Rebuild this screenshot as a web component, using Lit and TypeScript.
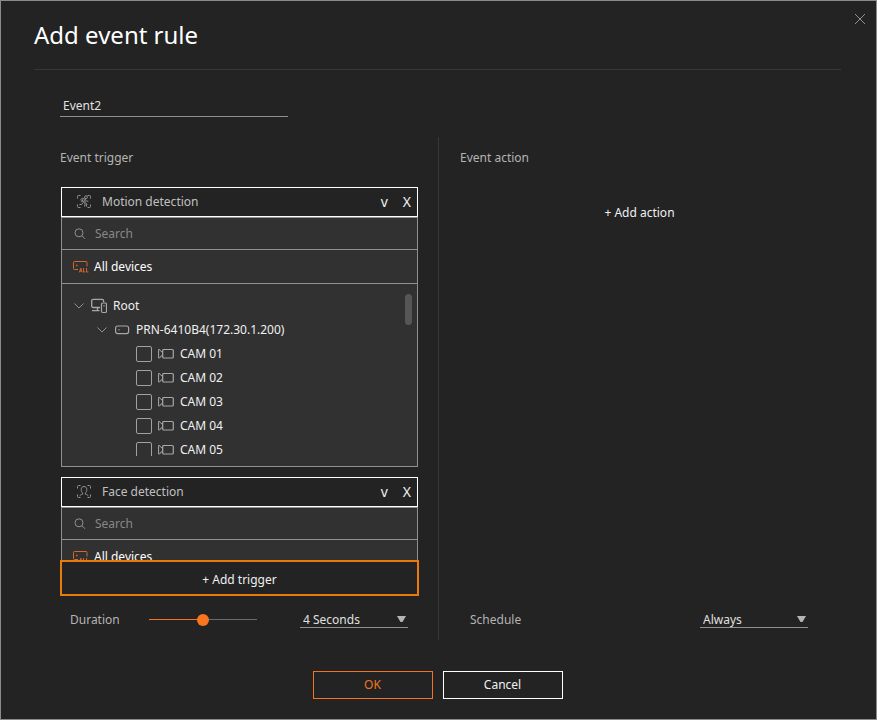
import { LitElement, html, css, svg, nothing } from "lit";
import { customElement, property, state } from "lit/decorators.js";
import { styleMap } from "lit/directives/style-map.js";

const frameCorners = svg`<path d="M1.5 3.5V1.5Q1.5 .5 2.5 .5H4.5M11.5 .5H13.5Q14.5 .5 14.5 1.5V3.5M14.5 9.5V11.5Q14.5 12.5 13.5 12.5H11.5M4.5 12.5H2.5Q1.5 12.5 1.5 11.5V9.5" />`;

const motionIcon = html`<svg width="16" height="14" viewBox="0 0 16 14" class="icon dim" aria-hidden="true">
  ${frameCorners}
  <circle cx="10" cy="2.2" r="1.4" />
  <path d="M4.3 5.2L6.2 3.2L9.3 4.3L7.2 7L9.2 8.6L8.6 11.6M9.3 4.3L10.4 6.1L12.4 6.3M6.9 7.6L5.8 9.4L3.4 9.6M9.4 6L8.6 7.2L10.8 8.9L10.3 11.6M4.8 6.4L6.9 4.6L5.9 7.2" />
</svg>`;

const faceIcon = html`<svg width="16" height="14" viewBox="0 0 16 14" class="icon dim" aria-hidden="true">
  ${frameCorners}
  <path d="M3.8 11.2C4 9.9 5 9.6 6.6 9.2V8C5.6 7.1 5.2 5.8 5.2 4.4C5.2 2.6 6.3 1.5 8 1.5S10.8 2.6 10.8 4.4C10.8 5.8 10.4 7.1 9.4 8V9.2C11 9.6 12 9.9 12.2 11.2" />
</svg>`;

const searchIcon = html`<svg width="12" height="12" viewBox="0 0 12 12" class="icon dim" aria-hidden="true">
  <circle cx="5" cy="4.8" r="4" /><path d="M8 7.8L11 10.8" />
</svg>`;

const allIcon = html`<svg width="16" height="13" viewBox="0 0 16 13" class="icon accent" aria-hidden="true">
  <path d="M5 9.5H1.5Q.5 9.5 .5 8.5V2.5Q.5 1.5 1.5 1.5H13Q14 1.5 14 2.5V6.5" />
  <path d="M3 5.5H4.5" stroke-width="1.4" />
  <path d="M6.4 12.4L7.8 8.2L9.2 12.4M6.9 11.2H8.7M10.6 8V12H12.3M13.6 8V12H15.3" />
</svg>`;

const rootIcon = html`<svg width="16" height="16" viewBox="0 0 16 16" class="icon" aria-hidden="true">
  <path d="M9 9.5H2.3Q.7 9.5 .7 8V2.8Q.7 1.3 2.3 1.3H11Q12.6 1.3 12.6 2.8V4M6.5 9.5V12.5M1 12.6H8.5" stroke-width="1.3" />
  <rect x="10.5" y="5" width="5" height="9.5" rx="1.2" stroke-width="1.2" /><path d="M13 7V8.5" />
</svg>`;

const recorderIcon = html`<svg width="16" height="10" viewBox="0 0 16 10" class="icon" aria-hidden="true">
  <rect x="1.6" y="1" width="13" height="7.6" rx="2" stroke-width="1.2" /><path d="M4.5 4.8H5.5" stroke-width="1.4" />
</svg>`;

const cameraIcon = html`<svg width="16" height="12" viewBox="0 0 16 12" class="icon" aria-hidden="true">
  <rect x="4.7" y="1.5" width="10.6" height="8.5" rx="1" stroke-width="1.2" /><path d="M4.5 4L3 3.5L1.6 1.5H.6V10H1.6L3 8L4.5 7.5" />
</svg>`;

const chevron = html`<svg width="10" height="6" viewBox="0 0 10 6" class="icon dim" aria-hidden="true">
  <path d="M.5 .5L5 5L9.5 .5" />
</svg>`;

const base = css`
  * { box-sizing: border-box; }
  button, input, select { font: inherit; color: inherit; margin: 0; padding: 0; border: 0; border-radius: 0; background: none; outline: none; }
  button { cursor: pointer; }
  .icon { flex: none; display: block; fill: none; stroke: #a8a8a8; stroke-width: 1; }
  .dim { stroke: #909090; }
  .accent { stroke: #d4672a; }
`;

@customElement("trigger-card")
class TriggerCard extends LitElement {
  @property() name = "";
  @property() kind = "motion";
  @property({ attribute: false }) cameras: string[] = [];

  static styles = [base, css`
    :host { display: block; flex: none; }
    .head { display: flex; align-items: center; height: 30px; padding: 0 6px 0 14px; border: 1px solid #fff; }
    .name { flex: 1; margin: 0 0 0 10px; font-size: 12px; font-weight: 400; color: #c0c0c0; }
    .mark { font-size: 14px; color: #f0f0f0; }
    .mark + .mark { margin-left: 15px; }
    .body { border: 1px solid #909090; background: #313131; }
    .search { display: flex; align-items: center; gap: 9px; height: 32px; padding: 0 12px; border-bottom: 1px solid #909090; }
    .search input { flex: 1; min-width: 0; }
    .search input::placeholder { color: #888; opacity: 1; }
    .all { display: flex; align-items: center; gap: 5px; width: 100%; height: 34px; padding: 0 11px; border-bottom: 1px solid #909090; text-align: left; color: #fff; }
    .tree { position: relative; padding: 10px 0; }
    .view { height: 162px; overflow: hidden; }
    .thumb { position: absolute; top: 10px; right: 5px; width: 7px; height: 31px; border-radius: 4px; background: #565656; }
    ul { list-style: none; margin: 0; padding: 0; }
    .row { display: flex; align-items: center; height: 24px; gap: 6px; }
    .root { padding-left: 12px; }
    .device { padding-left: 35px; }
    .camera { padding-left: 74px; }
    .row .icon:first-child { margin-right: 1px; }
    .check { appearance: none; flex: none; width: 16px; height: 16px; border: 1px solid #a0a0a0; border-radius: 2px; }
    .check:checked { background: #f37321; }
  `];

  private tree() {
    return html`<div class="tree">
      <div class="view">
        <div class="row root">${chevron}${rootIcon}<span>Root</span></div>
        <div class="row device">${chevron}${recorderIcon}<span>PRN-6410B4(172.30.1.200)</span></div>
        <ul>
          ${this.cameras.map((c) => html`<li><label class="row camera"><input class="check" type="checkbox" />${cameraIcon}<span>${c}</span></label></li>`)}
        </ul>
      </div>
      <div class="thumb"></div>
    </div>`;
  }

  render() {
    return html`
      <header class="head">
        ${this.kind === "motion" ? motionIcon : faceIcon}
        <h3 class="name">${this.name}</h3>
        <button class="mark" aria-label="Collapse">v</button>
        <button class="mark" aria-label="Remove">X</button>
      </header>
      <div class="body">
        <label class="search">${searchIcon}<input type="text" aria-label="Search" placeholder="Search" /></label>
        <button class="all">${allIcon}All devices</button>
        ${this.cameras.length ? this.tree() : nothing}
      </div>
    `;
  }
}

@customElement("app-root")
class AppRoot extends LitElement {
  @state() private duration = 50;
  private cameras = ["CAM 01", "CAM 02", "CAM 03", "CAM 04", "CAM 05"];

  static styles = [base, css`
    :host { display: block; font: 12px/20px "Noto Sans", "Open Sans", sans-serif; color: #f0f0f0; }
    .dialog { position: relative; display: flex; flex-direction: column; height: 100vh; min-height: 480px; border: 1px solid #8a8c8c; background: #232323; }
    .top { display: flex; align-items: center; height: 69px; margin: 0 35px 0 33px; border-bottom: 1px solid #373737; }
    h1 { margin: 0; font-size: 24px; line-height: 32px; font-weight: 400; color: #fff; }
    .close { position: absolute; top: 12px; right: 10px; width: 12px; height: 12px; }
    .title { width: 228px; height: 22px; margin: 25px 59px 20px; padding: 0 3px; border-bottom: 1px solid #909090; flex: none; color: #e0e0e0; }
    .columns { flex: 1; min-height: 0; display: grid; grid-template-columns: 1fr auto 1fr; grid-template-rows: minmax(0, 1fr); margin: 0 57px 0 59px; }
    .split { width: 1px; margin: 0 21px 0 19px; background: #373737; }
    .column { display: flex; flex-direction: column; min-width: 0; padding-top: 10px; }
    h2 { margin: 0 0 18px; font-size: 12px; line-height: 22px; font-weight: 400; color: #b4b4b4; }
    .list { flex: 1; min-height: 0; display: flex; flex-direction: column; gap: 10px; padding: 0 1px; overflow: auto; scrollbar-width: none; }
    .add-trigger { height: 36px; flex: none; padding-top: 4px; border: 2px solid #e87b0c; }
    .actions { flex: 1; padding-top: 16px; text-align: center; }
    .setting { display: flex; align-items: center; height: 16px; margin: 16px 10px 12px; color: #b4b4b4; flex: none; }
    .label { flex: 1; }
    .slider { appearance: none; width: 108px; height: 12px; margin-right: 43px; background: linear-gradient(#f37321, #f37321) 0 5px / var(--fill) 1px no-repeat, linear-gradient(#6a6a6a, #6a6a6a) 0 5px / 100% 1px no-repeat; }
    .slider::-webkit-slider-thumb { appearance: none; width: 12px; height: 12px; border-radius: 50%; background: #f9761f; }
    .pick { position: relative; display: flex; width: 108px; margin-right: 1px; }
    select { appearance: none; flex: 1; height: 16px; padding: 0 3px; line-height: 15px; border-bottom: 1px solid #909090; color: #e0e0e0; }
    .arrow { position: absolute; top: 4px; right: 2px; pointer-events: none; fill: #b4b4b4; }
    .foot { display: flex; justify-content: center; gap: 10px; padding: 31px 2px 20px 0; }
    .foot button { width: 120px; height: 28px; border: 1px solid #fff; }
    .foot .ok { border-color: #f37321; color: #f37321; }
  `];

  private picker(label: string, options: string[]) {
    return html`<span class="pick">
      <select aria-label=${label}>${options.map((o) => html`<option>${o}</option>`)}</select>
      <svg class="arrow" width="9" height="7" viewBox="0 0 9 7" aria-hidden="true"><path d="M0 0H9L5.5 6H3.5Z" /></svg>
    </span>`;
  }

  render() {
    return html`
      <main class="dialog">
        <header class="top"><h1>Add event rule</h1></header>
        <button class="close" aria-label="Close">
          <svg width="12" height="12" viewBox="0 0 12 12" class="icon dim" aria-hidden="true"><path d="M1 1L11 11M11 1L1 11" /></svg>
        </button>
        <input class="title" type="text" aria-label="Rule name" value="Event2" />
        <div class="columns">
          <section class="column">
            <h2>Event trigger</h2>
            <div class="list">
              <trigger-card name="Motion detection" kind="motion" .cameras=${this.cameras}></trigger-card>
              <trigger-card name="Face detection" kind="face"></trigger-card>
            </div>
            <button class="add-trigger">+ Add trigger</button>
            <div class="setting">
              <label class="label" for="duration">Duration</label>
              <input id="duration" class="slider" type="range" min="0" max="100" .value=${String(this.duration)}
                style=${styleMap({ "--fill": `${this.duration}%` })}
                @input=${(e: Event) => (this.duration = Number((e.target as HTMLInputElement).value))} />
              ${this.picker("Duration in seconds", ["4 Seconds", "8 Seconds", "12 Seconds"])}
            </div>
          </section>
          <div class="split"></div>
          <section class="column">
            <h2>Event action</h2>
            <div class="actions"><button>+ Add action</button></div>
            <div class="setting">
              <span class="label">Schedule</span>
              ${this.picker("Schedule", ["Always"])}
            </div>
          </section>
        </div>
        <footer class="foot"><button class="ok">OK</button><button>Cancel</button></footer>
      </main>
    `;
  }
}
